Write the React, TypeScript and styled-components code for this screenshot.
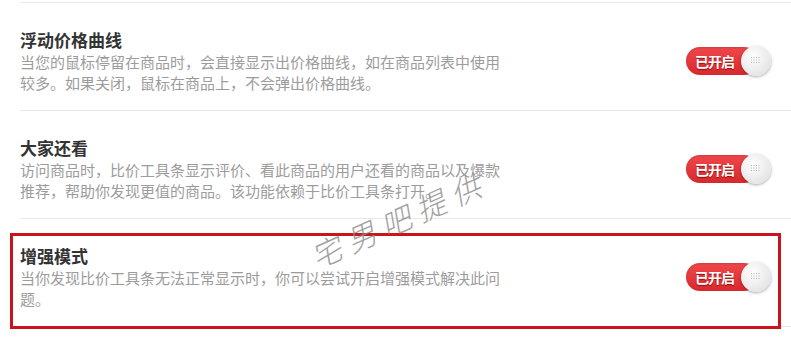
import styled, { createGlobalStyle } from "styled-components";

const GlobalStyle = createGlobalStyle`
	html, body {
		margin: 0;
		padding: 0;
		background: #fff;
	}
	body {
		font-family: "Microsoft YaHei", "Noto Sans CJK SC", "Noto Sans", sans-serif;
	}
`;

const Page = styled.div`
	position: relative;
	width: 791px;
	height: 343px;
	overflow: hidden;
	padding-left: 20px;
	box-sizing: border-box;
	border-top: 2px solid #fff;
`;

const List = styled.div`
	border-top: 1px solid #e8e8e8;
`;

const Row = styled.div`
	display: flex;
	align-items: center;
	justify-content: space-between;
	height: 108px;
	padding: 26px 20px 18px 0;
	box-sizing: border-box;
	border-bottom: 1px solid #e8e8e8;
`;

const Info = styled.div`
	display: flex;
	flex-direction: column;
`;

const Title = styled.div`
	font-size: 17px;
	line-height: 22px;
	font-weight: bold;
	color: #333;
`;

const Desc = styled.div`
	width: 484px;
	font-size: 15px;
	line-height: 21px;
	color: #9c9c9c;
`;

const Toggle = styled.div`
	position: relative;
	display: flex;
	align-items: center;
	width: 85px;
	height: 31px;
	margin-top: 1px;
`;

const Pill = styled.div`
	display: flex;
	align-items: center;
	width: 72px;
	height: 28px;
	padding-left: 9px;
	box-sizing: border-box;
	border-radius: 14px;
	background: linear-gradient(#f0474b, #d8282d);
	box-shadow: inset 0 1px 2px rgba(0, 0, 0, 0.15);
	color: #fff;
	font-size: 14px;
	font-weight: bold;
	letter-spacing: -1px;
	text-shadow: 0 1px 1px #8a0d10;
`;

const Knob = styled.div`
	position: absolute;
	right: 0;
	top: 0;
	width: 30px;
	height: 30px;
	border-radius: 50%;
	background: radial-gradient(circle at 40% 35%, #ffffff, #e6e6e6 70%, #d6d6d6);
	box-shadow: 0 1px 3px rgba(0, 0, 0, 0.35);
	display: flex;
	align-items: center;
	justify-content: center;
`;

const Highlight = styled.div`
	position: absolute;
	left: 10px;
	top: 231px;
	width: 771px;
	height: 96px;
	border: 3px solid #c9141b;
	box-sizing: border-box;
	pointer-events: none;
`;

const Watermark = styled.div`
	position: absolute;
	left: 312px;
	top: 233px;
	font-size: 30px;
	letter-spacing: 8px;
	color: #8a8a8a;
	font-weight: 300;
	font-style: italic;
	transform: rotate(-24deg);
	transform-origin: left center;
	white-space: nowrap;
	opacity: 0.8;
	pointer-events: none;
`;

function Dots() {
	const dots = [];
	for (let r = 0; r < 3; r++) {
		for (let c = 0; c < 4; c++) {
			dots.push(<rect key={`${r}-${c}`} x={c * 2.5} y={r * 2.5} width="1" height="1" fill="#b5b5b5" />);
		}
	}
	return (
		<svg width="10" height="7" viewBox="0 0 10 7">
			{dots}
		</svg>
	);
}

function Switch() {
	return (
		<Toggle>
			<Pill>已开启</Pill>
			<Knob>
				<Dots />
			</Knob>
		</Toggle>
	);
}

const settings = [
	{
		title: "浮动价格曲线",
		desc: "当您的鼠标停留在商品时，会直接显示出价格曲线，如在商品列表中使用较多。如果关闭，鼠标在商品上，不会弹出价格曲线。",
	},
	{
		title: "大家还看",
		desc: "访问商品时，比价工具条显示评价、看此商品的用户还看的商品以及爆款推荐，帮助你发现更值的商品。该功能依赖于比价工具条打开。",
	},
	{
		title: "增强模式",
		desc: "当你发现比价工具条无法正常显示时，你可以尝试开启增强模式解决此问题。",
	},
];

export default function App() {
	return (
		<>
			<GlobalStyle />
			<Page>
				<List>
					{settings.map((s) => (
						<Row key={s.title}>
							<Info>
								<Title>{s.title}</Title>
								<Desc>{s.desc}</Desc>
							</Info>
							<Switch />
						</Row>
					))}
				</List>
				<Highlight />
				<Watermark>宅男吧提供</Watermark>
			</Page>
		</>
	);
}
